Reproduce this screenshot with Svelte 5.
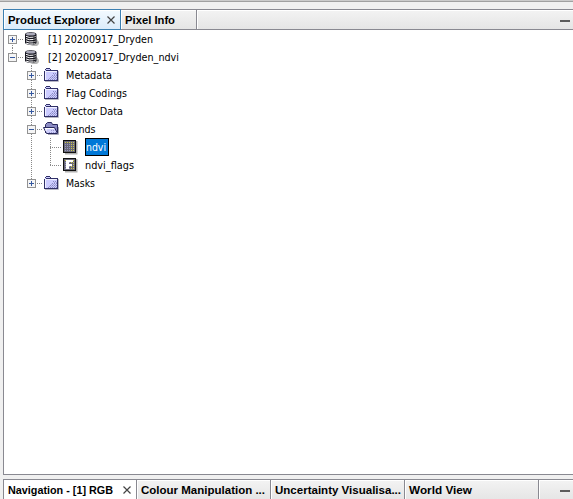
<script>
  const rows = [
    { label: '[1] 20200917_Dryden', w: 105, level: 1, icon: 'db', handle: '+' },
    { label: '[2] 20200917_Dryden_ndvi', w: 131, level: 1, icon: 'db', handle: '-' },
    { label: 'Metadata', w: 46, level: 2, icon: 'folder', handle: '+' },
    { label: 'Flag Codings', w: 61, level: 2, icon: 'folder', handle: '+' },
    { label: 'Vector Data', w: 57, level: 2, icon: 'folder', handle: '+' },
    { label: 'Bands', w: 29.5, level: 2, icon: 'open', handle: '-' },
    { label: 'ndvi', w: 20, level: 3, icon: 'band', selected: true },
    { label: 'ndvi_flags', w: 49, level: 3, icon: 'flag', last: true },
    { label: 'Masks', w: 29, level: 2, icon: 'folder', handle: '+', last: true }
  ];
  const dots = Array.from({ length: 25 }, (_, i) => [3 + (i % 5) * 2, 3 + Math.floor(i / 5) * 2]);
</script>

{#snippet text(label, w)}
  <svg class="text" width={w + 1} height="18"><text x="0" y="13" textLength={w} lengthAdjust="spacingAndGlyphs">{label}</text></svg>
{/snippet}

{#snippet close()}
  <svg class="close" width="10" height="10" viewBox="0 0 10 10"><path d="M1.5 1.5 8.5 8.5M8.5 1.5 1.5 8.5" stroke="#444" stroke-width="1.2" fill="none" /></svg>
{/snippet}

{#snippet handle(kind)}
  <svg class="handle" width="9" height="9" viewBox="0 0 9 9" shape-rendering="crispEdges">
    <rect x=".5" y=".5" width="8" height="8" fill="#f5f5f5" stroke="#929292" />
    <path d={kind === '+' ? 'M2 4.5H7M4.5 2V7' : 'M2 4.5H7'} stroke="#3558a0" />
  </svg>
{/snippet}

{#snippet icon(kind)}
  <svg class="icon" width="16" height="16" viewBox="0 0 16 16">
    {#if kind === 'db'}
      <path d="M11 7 14 11V13L12 15H5L10 13Z" fill="#999" opacity=".7" />
      <path d="M0 3.5C0 .6 11.5 .6 11.5 3.5V11.5C11.5 14.6 0 14.6 0 11.5Z" fill="#161620" />
      <ellipse cx="5.7" cy="3.2" rx="4.8" ry="1.4" fill="#a8a8b8" />
      <path d="M1 5.3Q4 7 8 6.2M1 7.6Q4 9.3 8 8.5M1 9.9Q4 11.6 8 10.8M1 12.1Q4 13.6 8 12.9" fill="none" stroke="#fff" />
      <path d="M8 6.2 11 5.4M8 8.5 11 7.7M8 10.8 11 10M8 12.9 10.5 12.3" fill="none" stroke="#999" />
    {:else if kind === 'folder'}
      <path d="M1 14.5H14.5V4" fill="none" stroke="#b8b8c4" />
      <path d="M0 4H1V2H2V1H6V2H7V3H14V14H0Z" fill="#303068" />
      <path d="M1 4H2V2H6V3H1ZM1 5H13V13H1Z" fill="#ccccff" />
      <path d="M1 4.5H13M1.5 5V13" stroke="#f0f0ff" />
      <path d="M9 6.5H13M8 8.5H13M6 10.5H13M4 12.5H13" stroke="#8b8bc5" stroke-dasharray="1 1" />
      <path d="M10 7.5H13M7 9.5H13M5 11.5H13" stroke="#9f9fd5" stroke-dasharray="1 1" />
    {:else if kind === 'open'}
      <path d="M14.5 6V13.5H4" fill="none" stroke="#a8a8b8" />
      <path d="M1.5 12V3.5L3.5 1.5H7.5L8.5 3.5H13.5V12" fill="#8c8cc4" stroke="#28285c" />
      <path d="M-.5 6.5H10.5L13.5 12.5H2.5Z" fill="#d0d0fc" stroke="#28285c" />
      <path d="M1 7.5H10M2 8V10" stroke="#fff" />
      <path d="M5 11.5H12M7 9.5H11" stroke="#9999cf" stroke-dasharray="1 1" />
    {:else}
      <path d="M13.5 2V14.5H2" fill="none" stroke="#b0b0b0" stroke-width="2" />
      <rect x=".5" y="1.5" width="12" height="12" fill="#686878" stroke="#111" />
      {#each dots as [x, y], i}
        <rect x={x - 1} {y} width="1" height="1" fill={i % 5 > 2 || i < 5 ? '#d0cb48' : '#9696bd'} />
      {/each}
      {#if kind === 'flag'}
        <path d="M3 3H10V5H6V7H9V9H6V12H3Z" fill="#fff" />
      {/if}
    {/if}
  </svg>
{/snippet}

<main>
  <div class="toolbar-edge"></div>
  <section class="explorer">
    <header>
      <div class="tab first active">{@render text('Product Explorer', 92)}{@render close()}</div>
      <div class="tab second">{@render text('Pixel Info', 50)}</div>
      <div class="rest"><i></i></div>
    </header>
    <div class="tree">
      {#each rows as row, i}
        <div class="row level{row.level}">
          {#if row.level === 1}
            <span class="rail root" class:top={i === 0} class:end={i === 1}>{@render handle(row.handle)}</span>
          {:else}
            <span class="rail branch" class:end={row.last && row.level === 2}>{#if row.handle}{@render handle(row.handle)}{/if}</span>
            {#if row.level === 3}<span class="rail leaf" class:end={row.last}></span>{/if}
          {/if}
          {@render icon(row.icon)}
          <span class="label" class:selected={row.selected}>{@render text(row.label, row.w)}</span>
          {#if i === 1}<span class="stub"></span>{/if}
        </div>
      {/each}
    </div>
  </section>
  <section class="navigation">
    <header>
      <div class="tab nav">{@render text('Navigation - [1] RGB', 105)}{@render close()}</div>
      <div class="tab wide">{@render text('Colour Manipulation ...', 124)}</div>
      <div class="tab wide">{@render text('Uncertainty Visualisa...', 126)}</div>
      <div class="tab wide">{@render text('World View', 63)}</div>
      <div class="rest"><i></i></div>
    </header>
  </section>
</main>

<style>
  main {
    width: 573px; height: 499px; overflow: hidden; box-sizing: border-box;
    display: flex; flex-direction: column; background: #f0f0f0; color: #000;
    font: 11px "DejaVu Sans Condensed", "DejaVu Sans", sans-serif;
  }
  svg { display: block; flex: none; }
  .text { overflow: visible; }
  .icon { overflow: visible; }
  .text text { fill: currentColor; }
  .toolbar-edge { height: 2px; flex: none; box-sizing: border-box; background: #cbcbcb; border-bottom: 1px solid #a0a0a0; margin-bottom: 7px; }
  section { margin-left: 3px; border-left: 1px solid #898991; border-top: 1px solid #898991; box-sizing: border-box; }
  .explorer { height: 466px; flex: none; border-bottom: 1px solid #898991; background: #fff; }
  .navigation { height: 20px; margin-top: 4px; flex: none; }
  header { display: flex; height: 20px; box-sizing: border-box; border-bottom: 1px solid #898991; font: bold 11px "Liberation Sans", Arial, sans-serif; }
  .navigation header { border-bottom: 0; }
  .tab, .rest { box-sizing: border-box; display: flex; align-items: center; background: linear-gradient(#f3f3f3, #e5e5e5); box-shadow: inset 1px 1px #fff; }
  .tab { padding-left: 4px; border-right: 1px solid #898991; flex: none; }
  .first { width: 118px; margin: -1px 0 -1px -1px; border: 1px solid #3c7fb1; }
  .active { background: linear-gradient(#f3faff, #dcebfa); }
  .second { width: 76px; }
  .close { margin-left: 5px; }
  .nav { width: 133px; background: #fff; }
  .nav .close { margin-left: 8px; }
  .wide { width: 134px; }
  .rest { flex: 1; justify-content: flex-end; padding-right: 3px; }
  .rest i { width: 10px; height: 2px; background: #5c5c5c; margin-top: 2px; }
  .row { height: 18px; display: flex; align-items: center; position: relative; }
  .rail { height: 18px; flex: none; position: relative; display: flex; align-items: center;
    --v: repeating-linear-gradient(#888 0 1px, transparent 1px 2px);
    --h: repeating-linear-gradient(90deg, #888 0 1px, transparent 1px 2px);
    background-image: var(--v), var(--h); background-repeat: no-repeat; }
  .handle { margin-left: 4px; }
  .root { width: 20px; background-size: 1px 18px, 11px 1px; background-position: 8px 0, 8px 9px; }
  .root.top { background-size: 1px 9px, 11px 1px; background-position: 8px 9px, 8px 9px; }
  .root.end { background-size: 1px 9px, 11px 1px; }
  .branch { width: 20px; margin-left: 19px; background-size: 1px 18px, 11px 1px; background-position: 8px 0, 8px 9px; }
  .branch.end { background-size: 1px 9px, 11px 1px; }
  .level3 .branch { background-size: 1px 18px, 0 0; }
  .leaf { width: 19px; background-size: 1px 18px, 11px 1px; background-position: 7px 0, 7px 9px; }
  .leaf.end { background-size: 1px 9px, 11px 1px; }
  .icon { margin-left: 1px; }
  .level3 .icon { margin-left: 1px; }
  .level1 .label { margin-left: 7px; }
  .level2 .label { margin-left: 6px; }
  .level3 .label { margin-left: 6px; }
  .label { height: 18px; box-sizing: border-box; }
  .label.selected { width: 24px; border: 1px solid #000; background: #0078d7; color: #fff; }
  .selected .text { margin-top: -1px; }
  .stub { position: absolute; left: 27px; top: 17px; width: 1px; height: 1px; background: #999; }
</style>
